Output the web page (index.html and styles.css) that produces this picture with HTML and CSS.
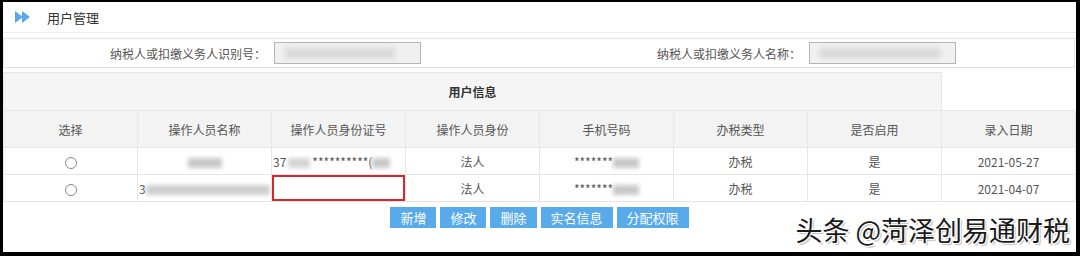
FILE: index.html
```html
<!DOCTYPE html>
<html lang="zh-CN">
<head>
    <meta charset="UTF-8">
    <title>用户管理</title>
    <link rel="stylesheet" href="styles.css">
</head>
<body>
    <div class="page">
        <div class="title-bar">
            <svg class="title-icon" width="16" height="12" viewBox="0 0 16 12">
                <polygon points="0,0 8,6 0,12" fill="#5aa6ec"/>
                <polygon points="7,0 15,6 7,12" fill="#5aa6ec"/>
            </svg>
            <span class="title-text">用户管理</span>
        </div>

        <div class="filter-box">
            <div class="filter-item">
                <label class="filter-label">纳税人或扣缴义务人识别号：</label>
                <div class="filter-input"><span class="blur blur-in1"></span></div>
            </div>
            <div class="filter-item">
                <label class="filter-label">纳税人或扣缴义务人名称：</label>
                <div class="filter-input"><span class="blur blur-in2"></span></div>
            </div>
        </div>

        <table class="user-table">
            <colgroup>
                <col class="col"><col class="col"><col class="col"><col class="col">
                <col class="col"><col class="col"><col class="col"><col class="col">
            </colgroup>
            <tr class="group-row">
                <th colspan="7" class="group-cell">用户信息</th>
                <th class="empty-cell"></th>
            </tr>
            <tr class="head-row">
                <th>选择</th>
                <th>操作人员名称</th>
                <th>操作人员身份证号</th>
                <th>操作人员身份</th>
                <th>手机号码</th>
                <th>办税类型</th>
                <th>是否启用</th>
                <th>录入日期</th>
            </tr>
            <tr class="data-row">
                <td><span class="radio"></span></td>
                <td><span class="blur blur-name"></span></td>
                <td class="left">37<span class="blur blur-s"></span>**********(<span class="blur blur-s2"></span></td>
                <td>法人</td>
                <td>*******<span class="blur blur-tel"></span></td>
                <td>办税</td>
                <td>是</td>
                <td>2021-05-27</td>
            </tr>
            <tr class="data-row">
                <td><span class="radio"></span></td>
                <td class="left">3<span class="blur blur-long"></span></td>
                <td class="marked"></td>
                <td>法人</td>
                <td>*******<span class="blur blur-tel"></span></td>
                <td>办税</td>
                <td>是</td>
                <td>2021-04-07</td>
            </tr>
        </table>

        <div class="actions">
            <button class="btn">新增</button>
            <button class="btn">修改</button>
            <button class="btn">删除</button>
            <button class="btn">实名信息</button>
            <button class="btn">分配权限</button>
        </div>

        <div class="watermark">头条 @菏泽创易通财税</div>
    </div>
</body>
</html>
```

FILE: styles.css
```css
body {
    margin: 0;
    padding: 2px 4px 4px 3px;
    background-color: #000;
    font-family: "Noto Sans CJK SC", "Noto Sans", sans-serif;
}
.page {
    position: relative;
    height: 250px;
    background-color: #fff;
    overflow: hidden;
}
.title-bar {
    display: flex;
    align-items: center;
    height: 30px;
    border-bottom: 1px solid #ececec;
}
.title-icon {
    margin-left: 12px;
    margin-right: 16px;
}
.title-text {
    font-size: 13px;
    color: #333;
}
.filter-box {
    display: flex;
    margin-top: 5px;
    height: 28px;
    width: 1070px;
    border: 1px solid #e3e3e3;
}
.filter-item {
    display: flex;
    align-items: center;
    width: 535px;
}
.filter-label {
    width: 262px;
    text-align: right;
    font-size: 12px;
    color: #555;
}
.filter-input {
    display: flex;
    align-items: center;
    margin-left: 8px;
    width: 145px;
    height: 20px;
    background-color: #f0f0f0;
    border: 1px solid #b5b5b5;
}
.blur {
    display: inline-block;
    height: 10px;
    background-color: #c8c8c8;
    filter: blur(2px);
    vertical-align: middle;
}
.blur-in1 {
    width: 110px;
    margin-left: 10px;
    background-color: #dadada;
}
.blur-in2 {
    width: 120px;
    margin-left: 10px;
    background-color: #dadada;
}
.blur-name {
    width: 34px;
}
.blur-s {
    width: 22px;
    margin: 0 2px;
    background-color: #d5d5d5;
}
.blur-s2 {
    width: 18px;
}
.blur-tel {
    width: 26px;
}
.blur-long {
    width: 124px;
    background-color: #cfcfcf;
}
.user-table {
    margin-top: 4px;
    width: 1072px;
    border-collapse: collapse;
    table-layout: fixed;
    font-size: 12px;
    color: #555;
}
.user-table .col {
    width: 134px;
}
.user-table th,
.user-table td {
    border: 1px solid #e6e6e6;
    text-align: center;
    font-weight: normal;
    padding: 0;
    white-space: nowrap;
    overflow: hidden;
}
.user-table .group-row {
    height: 38px;
}
.user-table .group-cell {
    background-color: #f5f5f5;
    color: #333;
    font-weight: bold;
}
.user-table .empty-cell {
    background-color: #fff;
    border-top: none;
    border-right: none;
}
.user-table .head-row {
    height: 37px;
    background-color: #f3f3f3;
}
.user-table .data-row {
    height: 27px;
}
.user-table .left {
    text-align: left;
    padding-left: 1px;
}
.user-table .marked {
    box-shadow: inset 0 0 0 2px #d8262b;
}
.radio {
    display: inline-block;
    width: 10px;
    height: 10px;
    border: 1px solid #888;
    border-radius: 50%;
    vertical-align: middle;
}
.actions {
    display: flex;
    justify-content: center;
    gap: 4px;
    margin-top: 5px;
}
.btn {
    height: 21px;
    padding: 0 10px;
    border: none;
    background-color: #58aaeb;
    color: #fff;
    font-family: inherit;
    font-size: 13px;
    line-height: 21px;
}
.watermark {
    position: absolute;
    right: 6px;
    bottom: 3px;
    font-size: 27px;
    color: #1a1a1a;
    text-shadow: -1px -1px 0 #fff, 1px 1px 0 #fff, 1px -1px 0 #fff, -1px 1px 0 #fff, 2px 2px 1px #bbb;
}
```
